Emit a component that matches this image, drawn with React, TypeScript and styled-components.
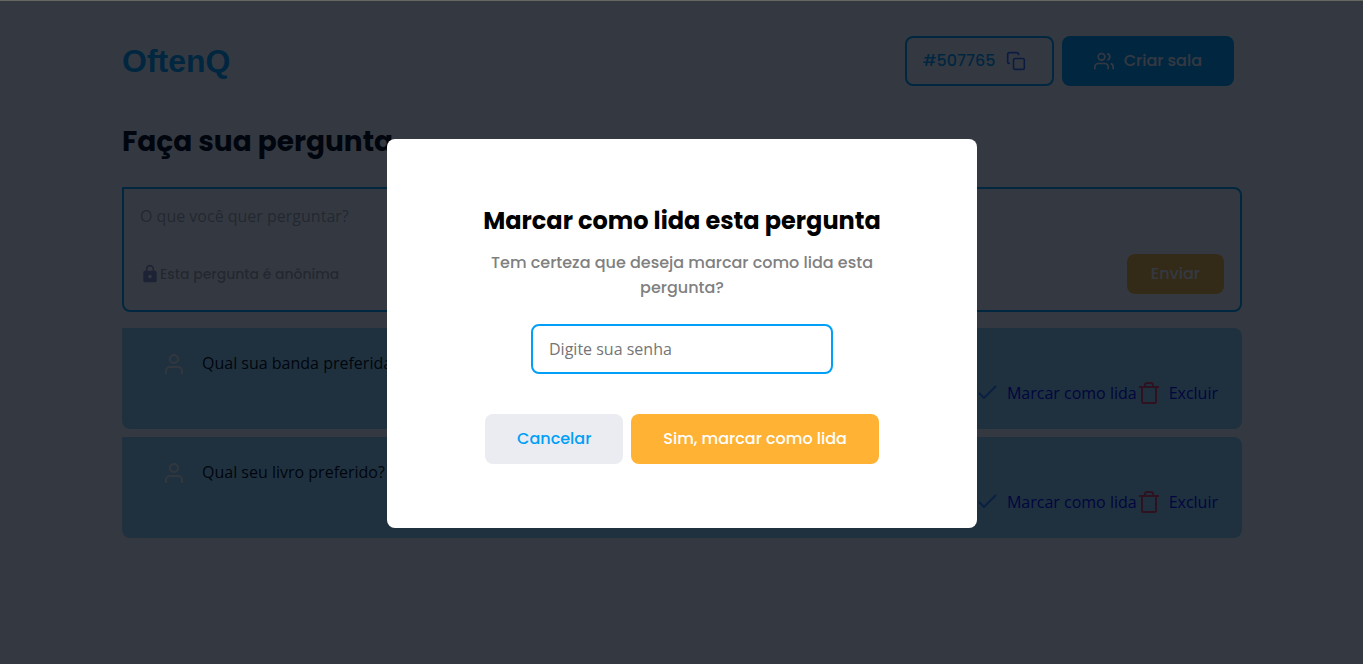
import React from "react";
import styled, { createGlobalStyle } from "styled-components";

const display = `"Poppins", "Inter", sans-serif`;
const body = `"Open Sans", sans-serif`;
const blue = "#009ff8";

const GlobalStyle = createGlobalStyle`
  *, *::before, *::after { box-sizing: border-box; margin: 0; padding: 0; }
  body { background: #fff; color: #000; font: 400 16px/24px ${body}; }
  button, input, textarea { font: inherit; }
  button { border: 0; cursor: pointer; }
`;

const Page = styled.div`
  min-height: 100vh;
  padding: 36px 16px 0 17px;
`;

const Container = styled.div`
  max-width: 1120px;
  margin: 0 auto;
`;

const Header = styled.header`
  display: flex;
  align-items: center;
  justify-content: space-between;
  padding-right: 8px;
`;

const Logo = styled.a`
  font: 700 32px/48px "Liberation Sans", Arial, sans-serif;
  color: ${blue};
  text-decoration: none;
`;

const HeaderActions = styled.div`
  display: flex;
  gap: 8px;
`;

const Button = styled.button<{ $tone: "primary" | "accent" | "muted"; $small?: boolean }>`
  display: flex;
  align-items: center;
  justify-content: center;
  gap: 10px;
  height: ${(p) => (p.$small ? 40 : 50)}px;
  padding: 0 ${(p) => (p.$small ? 24 : 32)}px;
  border-radius: 8px;
  font-family: ${display};
  font-weight: 500;
  white-space: nowrap;
  color: ${(p) => (p.$tone === "muted" ? blue : "#fff")};
  background: ${(p) => ({ primary: blue, accent: "#ffb233", muted: "#ebecf1" })[p.$tone]};
`;

const RoomCode = styled.button`
  display: flex;
  align-items: center;
  gap: 10px;
  min-width: 149px;
  height: 50px;
  padding: 0 16px;
  border: 2px solid ${blue};
  border-radius: 8px;
  background: #fff;
  color: ${blue};
  font-family: ${display};
  font-weight: 500;
  svg { color: #3a70ff; }
`;

const Heading = styled.h1`
  margin-top: 35px;
  font: 700 28px/42px ${display};
`;

const AskForm = styled.form`
  margin-top: 24px;
  padding: 16px;
  border: 2px solid ${blue};
  border-radius: 0 8px 8px 8px;
`;

const Question = styled.textarea`
  display: block;
  width: 100%;
  height: 49px;
  border: 0;
  resize: none;
  outline: 0;
  background: transparent;
  line-height: 22px;
  &::placeholder { color: #a8a8a8; }
`;

const AskFooter = styled.div`
  display: flex;
  align-items: center;
  justify-content: space-between;
`;

const Anonymous = styled.p`
  display: flex;
  align-items: center;
  font: 500 14px/20px ${display};
  color: #a8a8a8;
  svg { color: #8a8ac0; }
`;

const List = styled.ul`
  display: grid;
  gap: 8px;
  margin-top: 16px;
  list-style: none;
`;

const Card = styled.li`
  display: flex;
  flex-direction: column;
  justify-content: space-between;
  min-height: 101px;
  padding: 24px;
  border-radius: 0 8px 8px 8px;
  background: #96d4ee;
`;

const CardText = styled.div`
  display: flex;
  gap: 16px;
  padding-left: 16px;
  line-height: 22px;
  svg { color: #f4f4f4; }
`;

const CardActions = styled.div`
  display: flex;
  justify-content: flex-end;
`;

const ActionLink = styled.a<{ $icon: string }>`
  display: flex;
  align-items: center;
  gap: 8px;
  color: #0000ee;
  text-decoration: none;
  svg { color: ${(p) => p.$icon}; }
`;

const Overlay = styled.div`
  position: fixed;
  inset: 0;
  display: flex;
  align-items: center;
  justify-content: center;
  padding: 2px 0 0 1px;
  border-top: 1px solid #66675f;
  background: rgba(1, 7, 17, 0.8);
`;

const Modal = styled.div`
  display: flex;
  flex-direction: column;
  align-items: center;
  width: 100%;
  max-width: 590px;
  padding: 64px 96px;
  border-radius: 8px;
  background: #fff;
  text-align: center;
`;

const ModalTitle = styled.h2`
  font: 700 24px/36px ${display};
  white-space: nowrap;
`;

const ModalText = styled.p`
  margin: 11px 0 24px;
  font: 500 16px/25px ${display};
  color: #808080;
`;

const Password = styled.input`
  width: 302px;
  max-width: 100%;
  height: 50px;
  padding: 0 16px;
  border: 2px solid ${blue};
  border-radius: 8px;
  background: #fff;
  outline: 0;
  &::placeholder { color: #757575; }
`;

const ModalActions = styled.div`
  display: flex;
  gap: 8px;
  margin-top: 40px;
`;

const Icon = ({ size = 24, stroke = 2, children }: { size?: number; stroke?: number; children: React.ReactNode }) => (
  <svg width={size} height={size} viewBox="0 0 24 24" fill="none" stroke="currentColor" strokeWidth={stroke} strokeLinejoin="round" aria-hidden="true">
    {children}
  </svg>
);

const UserIcon = () => (
  <Icon>
    <path d="M20 22v-3a4 4 0 0 0-4-4H8a4 4 0 0 0-4 4v3" />
    <circle cx="12" cy="7" r="4" />
  </Icon>
);

const questions = ["Qual sua banda preferida?", "Qual seu livro preferido?"];

export default function App() {
  return (
    <>
      <GlobalStyle />
      <Page>
        <Container>
          <Header>
            <Logo href="#">OftenQ</Logo>
            <HeaderActions>
              <RoomCode type="button">
                #507765
                <Icon size={20}>
                  <rect x="9" y="9" width="13" height="13" rx="2" />
                  <path d="M5 15H4a2 2 0 0 1-2-2V4a2 2 0 0 1 2-2h9a2 2 0 0 1 2 2v1" />
                </Icon>
              </RoomCode>
              <Button type="button" $tone="primary">
                <Icon size={20}>
                  <path d="M17 22v-3a4 4 0 0 0-4-4H5a4 4 0 0 0-4 4v3" />
                  <circle cx="9" cy="7" r="4" />
                  <path d="M23 22v-3a4 4 0 0 0-3-3.870M16 3.130a4 4 0 0 1 0 7.750" />
                </Icon>
                Criar sala
              </Button>
            </HeaderActions>
          </Header>
          <Heading>Faça sua pergunta</Heading>
          <AskForm>
            <Question aria-label="Pergunta" placeholder="O que você quer perguntar?" />
            <AskFooter>
              <Anonymous>
                <svg width="20" height="20" viewBox="0 0 24 24" fill="currentColor" aria-hidden="true">
                  <path d="M18 8h-1V6c0-2.760-2.240-5-5-5S7 3.240 7 6v2H6c-1.100 0-2 .9-2 2v10c0 1.100.9 2 2 2h12c1.100 0 2-.9 2-2V10c0-1.100-.9-2-2-2zm-6 9c-1.100 0-2-.9-2-2s.9-2 2-2 2 .9 2 2-.9 2-2 2zm3.100-9H8.900V6c0-1.710 1.390-3.100 3.100-3.100s3.100 1.390 3.100 3.100v2z" />
                </svg>
                Esta pergunta é anônima
              </Anonymous>
              <Button type="button" $tone="accent" $small>Enviar</Button>
            </AskFooter>
          </AskForm>
          <List>
            {questions.map((q) => (
              <Card key={q}>
                <CardText>
                  <UserIcon />
                  <p>{q}</p>
                </CardText>
                <CardActions>
                  <ActionLink href="#" $icon="#2a80f8">
                    <Icon><path d="M21 5 9 17l-5-5" /></Icon>
                    Marcar como lida
                  </ActionLink>
                  <ActionLink href="#" $icon="#e73f5d">
                    <Icon>
                      <path d="M2 6h20M19 6v15a1 1 0 0 1-1 1H6a1 1 0 0 1-1-1V6m3 0V4a2 2 0 0 1 2-2h4a2 2 0 0 1 2 2v2" />
                    </Icon>
                    Excluir
                  </ActionLink>
                </CardActions>
              </Card>
            ))}
          </List>
        </Container>
      </Page>
      <Overlay>
        <Modal role="dialog" aria-modal="true" aria-labelledby="modal-title">
          <ModalTitle id="modal-title">Marcar como lida esta pergunta</ModalTitle>
          <ModalText>Tem certeza que deseja marcar como lida esta pergunta?</ModalText>
          <Password type="password" aria-label="Senha" placeholder="Digite sua senha" />
          <ModalActions>
            <Button type="button" $tone="muted">Cancelar</Button>
            <Button type="button" $tone="accent">Sim, marcar como lida</Button>
          </ModalActions>
        </Modal>
      </Overlay>
    </>
  );
}
